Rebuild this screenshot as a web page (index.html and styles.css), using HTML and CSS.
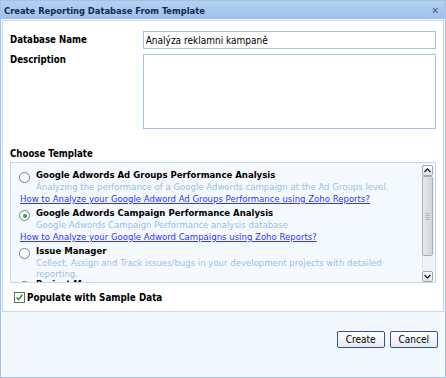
FILE: index.html
```html
<!DOCTYPE html>
<html lang="en">
<head>
    <meta charset="UTF-8">
    <title>Create Reporting Database From Template</title>
    <link rel="stylesheet" href="styles.css">
</head>
<body>
    <div class="dialog">
        <div class="titlebar">
            <span class="title">Create Reporting Database From Template</span>
            <span class="close">&#x2715;</span>
        </div>
        <div class="panel">
            <div class="row">
                <label class="label">Database Name</label>
                <input class="field" type="text" value="Analýza reklamni kampaně">
            </div>
            <div class="row">
                <label class="label top">Description</label>
                <textarea class="field area"></textarea>
            </div>

            <div class="section">Choose Template</div>
            <div class="listbox">
                <div class="list">
                    <div class="item">
                        <span class="radio"></span>
                        <div class="text">
                            <div class="name">Google Adwords Ad Groups Performance Analysis</div>
                            <div class="desc">Analyzing the performance of a Google Adwords campaign at the Ad Groups level.</div>
                        </div>
                    </div>
                    <a class="help" href="#">How to Analyze your Google Adword Ad Groups Performance using Zoho Reports?</a>

                    <div class="item">
                        <span class="radio checked"></span>
                        <div class="text">
                            <div class="name">Google Adwords Campaign Performance Analysis</div>
                            <div class="desc">Google Adwords Campaign Performance analysis database</div>
                        </div>
                    </div>
                    <a class="help" href="#">How to Analyze your Google Adword Campaigns using Zoho Reports?</a>

                    <div class="item">
                        <span class="radio"></span>
                        <div class="text">
                            <div class="name">Issue Manager</div>
                            <div class="desc">Collect, Assign and Track issues/bugs in your development projects with detailed<br>reporting.</div>
                        </div>
                    </div>

                    <div class="item last">
                        <span class="radio"></span>
                        <div class="text">
                            <div class="name">Project Manager</div>
                        </div>
                    </div>
                </div>
                <div class="scrollbar">
                    <div class="arrow up">
                        <svg width="7" height="5" viewBox="0 0 7 5"><path d="M0.5 4 L3.5 1 L6.5 4" fill="none" stroke="#222" stroke-width="1.4"/></svg>
                    </div>
                    <div class="thumb"><span class="grip"></span></div>
                    <div class="track"></div>
                    <div class="arrow down">
                        <svg width="7" height="5" viewBox="0 0 7 5"><path d="M0.5 1 L3.5 4 L6.5 1" fill="none" stroke="#222" stroke-width="1.4"/></svg>
                    </div>
                </div>
            </div>

            <label class="sample">
                <span class="check">
                    <svg width="9" height="9" viewBox="0 0 9 9"><path d="M1.5 4.5 L3.5 6.5 L7.5 1.5" fill="none" stroke="#2f9a2f" stroke-width="1.6"/></svg>
                </span>
                Populate with Sample Data
            </label>
        </div>
        <div class="footer">
            <button class="btn" type="button">Create</button>
            <button class="btn" type="button">Cancel</button>
        </div>
    </div>
</body>
</html>
```

FILE: styles.css
```css
body {
    margin: 0;
    font-family: 'DejaVu Sans Condensed', 'DejaVu Sans', sans-serif;
    font-size: 9.5px;
    color: #000;
}

.dialog {
    width: 446px;
    height: 378px;
    box-sizing: border-box;
    border: 1px solid #a3c3e6;
    background-color: #f3f8fd;
    display: flex;
    flex-direction: column;
}

.titlebar {
    height: 18px;
    background-image: linear-gradient(#b4d1f2, #9dc1ec);
    display: flex;
    align-items: center;
    justify-content: space-between;
    padding: 0 6px 0 3px;
}

.title {
    font-weight: bold;
    font-size: 9.3px;
    color: #142a4c;
}

.close {
    font-size: 10px;
    font-weight: bold;
    color: #45607f;
}

.panel {
    height: 292px;
    margin: 1px 1px 0 1px;
    box-sizing: border-box;
    background-color: #fff;
    border: 1px solid #c4d8ee;
    padding: 10px 7px 0 7px;
}

.row {
    display: flex;
    margin-bottom: 5px;
}

.label {
    width: 133px;
    font-weight: bold;
    font-size: 9.6px;
    line-height: 12px;
    padding-top: 3px;
}

.label.top {
    padding-top: 0;
}

.field {
    width: 294px;
    height: 18px;
    box-sizing: border-box;
    border: 1px solid #a8c3e2;
    font-family: 'DejaVu Sans Condensed', 'DejaVu Sans', sans-serif;
    font-size: 10px;
    padding: 0 2px;
    margin: 0;
    outline: none;
}

.area {
    height: 75px;
    resize: none;
}

.section {
    font-weight: bold;
    font-size: 9.6px;
    margin-top: 19px;
    height: 14px;
}

.listbox {
    display: flex;
    height: 121px;
    box-sizing: border-box;
    border: 1px solid #c4d8ee;
    background-color: #f4f9fe;
    overflow: hidden;
}

.list {
    flex: 1;
    padding: 4px 0 0 8px;
    overflow: hidden;
}

.item {
    display: flex;
}

.item.last {
    margin-top: -3px;
}

.radio {
    width: 9px;
    height: 9px;
    border: 1px solid #6f8197;
    border-radius: 50%;
    background-color: #fff;
    margin: 5px 6px 0 0;
    flex-shrink: 0;
    position: relative;
}

.radio.checked::after {
    content: "";
    position: absolute;
    left: 2.5px;
    top: 2.5px;
    width: 4px;
    height: 4px;
    border-radius: 50%;
    background-color: #2fa83a;
}

.name {
    font-weight: bold;
    line-height: 12px;
    padding-top: 2px;
}

.desc {
    color: #9cbfe3;
    line-height: 11px;
}

.help {
    display: block;
    color: #3333ff;
    line-height: 12px;
    margin: 1px 0 0 1px;
    white-space: nowrap;
}

.scrollbar {
    width: 11px;
    margin: 2px 2px 0 0;
    display: flex;
    flex-direction: column;
}

.arrow {
    height: 9px;
    border: 1px solid #9ea8b3;
    border-radius: 2px;
    background-image: linear-gradient(#fdfdfd, #dfe2e6);
    display: flex;
    align-items: center;
    justify-content: center;
}

.thumb {
    height: 80px;
    box-sizing: border-box;
    border: 1px solid #a6adb6;
    border-radius: 2px;
    background-image: linear-gradient(90deg, #e6e8ec, #d2d6dc);
    display: flex;
    align-items: center;
    justify-content: center;
}

.grip {
    width: 5px;
    height: 7px;
    background-image: repeating-linear-gradient(#b4bac2 0 1px, transparent 1px 2px);
}

.track {
    flex: 1;
    background-color: #f1f2f4;
    border-left: 1px solid #dcdfe3;
}

.sample {
    display: flex;
    align-items: center;
    font-weight: bold;
    font-size: 9.8px;
    margin: 9px 0 0 4px;
}

.check {
    width: 9px;
    height: 9px;
    border: 1px solid #59745a;
    background-color: #fff;
    margin-right: 2px;
    display: flex;
}

.footer {
    flex: 1;
    display: flex;
    justify-content: flex-end;
    align-items: flex-start;
    padding: 19px 7px 0 0;
    gap: 5px;
}

.btn {
    height: 17px;
    box-sizing: border-box;
    padding: 0 8px;
    border: 1px solid #31558a;
    border-radius: 2px;
    background-image: linear-gradient(#ffffff, #e6eaf0);
    font-family: 'DejaVu Sans Condensed', 'DejaVu Sans', sans-serif;
    font-size: 10px;
    color: #000;
}
```
